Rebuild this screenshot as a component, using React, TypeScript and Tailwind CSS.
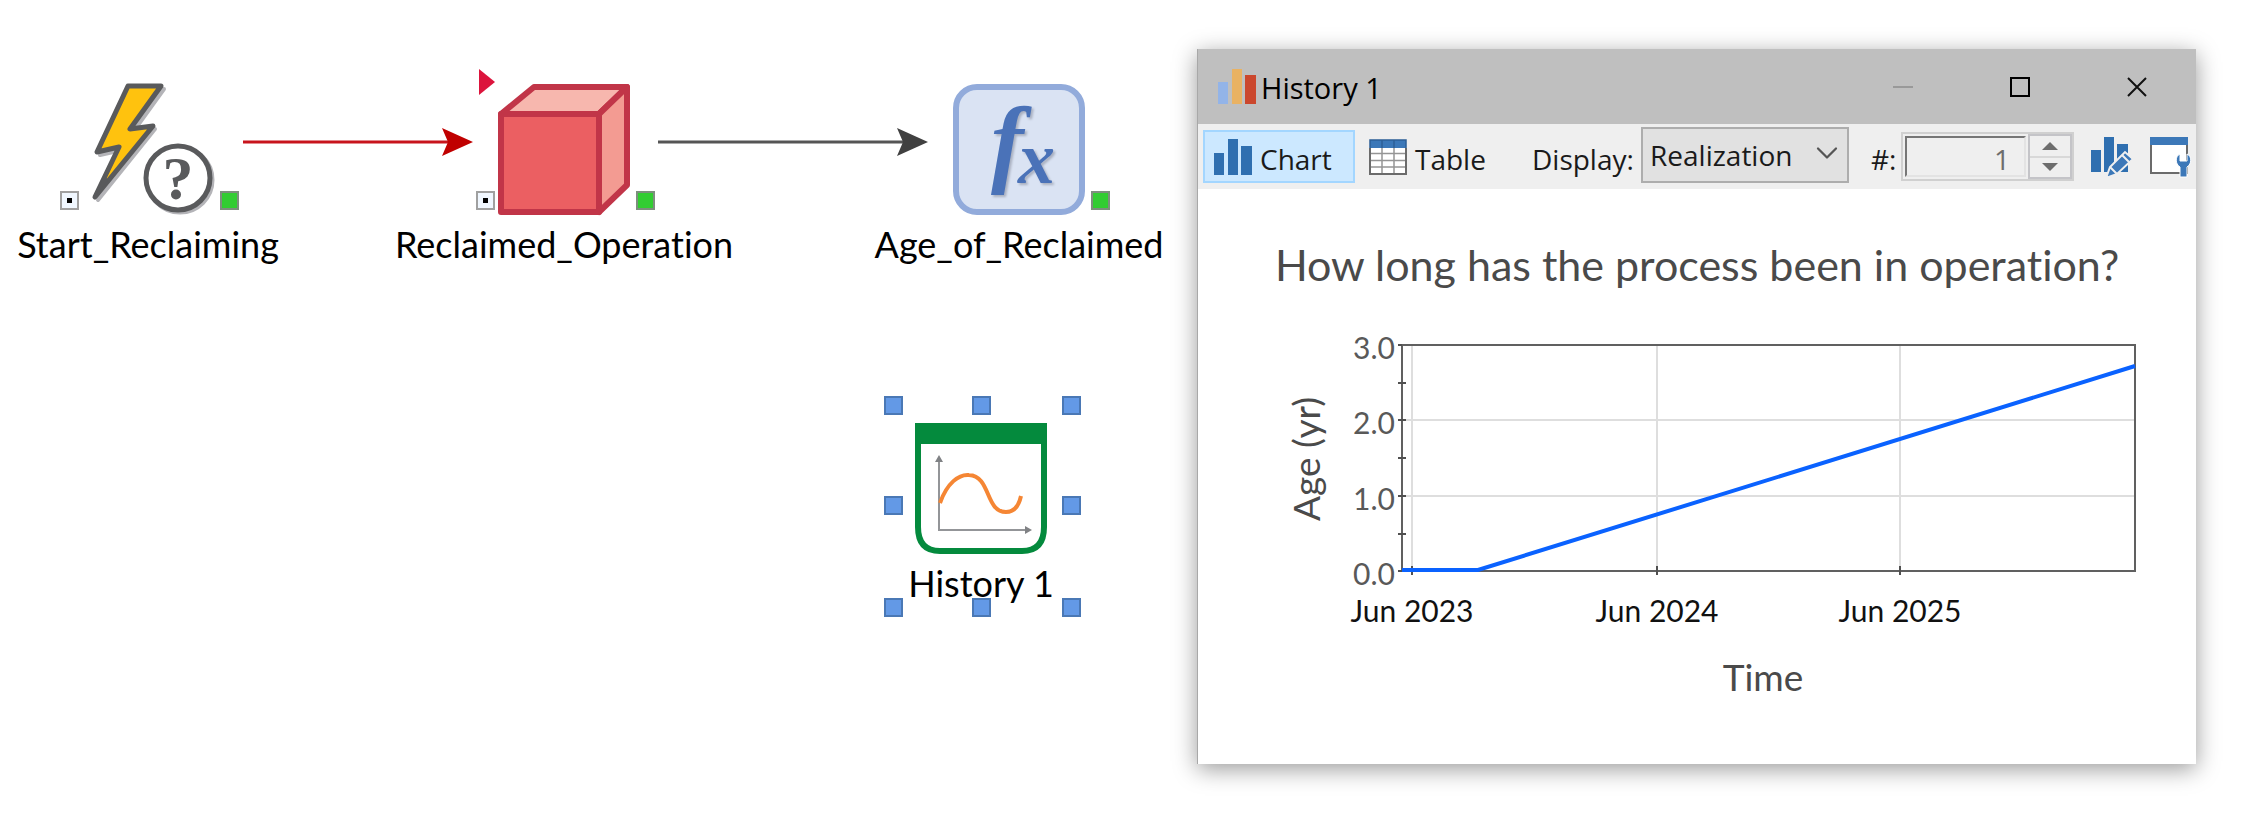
import React from 'react';
import { ChevronDown } from 'lucide-react';

const InputPort = () => (
  <span className="absolute -left-[22px] top-[107px] flex h-[19px] w-[19px] items-center justify-center border-2 border-[#a0a0a0] bg-[#f0f7ff]">
    <span className="h-[5px] w-[5px] bg-black" />
  </span>
);

const OutputPort = () => (
  <span className="absolute -right-[25px] top-[107px] h-[19px] w-[19px] border-2 border-[#7d8f7d] bg-[#32cd32]" />
);

type NodeProps = {
  label: string;
  className: string;
  children: React.ReactNode;
};

const ModelNode = ({ label, className, children }: NodeProps) => (
  <div className={`absolute flex w-[132px] flex-col items-center ${className}`}>
    {children}
    <span className="mt-2 whitespace-nowrap text-[36px] leading-10 text-black">{label}</span>
  </div>
);

const EventIcon = () => (
  <svg viewBox="0 0 132 132" className="h-[132px] w-[132px] overflow-visible">
    <path
      d="M49 5 L82 5 L51 48 L73 45 L16 116 L40 66 L18 71 Z"
      fill="#b4b4b8"
      stroke="#b4b4b8"
      strokeWidth="4"
      strokeLinejoin="round"
    />
    <path
      d="M46 2 L79 2 L48 45 L71 42 L13 113 L37 63 L15 68 Z"
      fill="#ffc20e"
      stroke="#595a5c"
      strokeWidth="5"
      strokeLinejoin="round"
    />
    <path d="M13 113 L22 91 L26 96 Z" fill="#595a5c" />
    <circle cx="98" cy="96" r="32" fill="none" stroke="#b4b4b8" strokeWidth="5" />
    <circle cx="96" cy="94" r="32" fill="#fff" stroke="#595a5c" strokeWidth="5" />
    <text x="96" y="115" textAnchor="middle" fontSize="62" fontWeight="700" fill="#595a5c" className="font-['Liberation_Serif',serif]">
      ?
    </text>
  </svg>
);

const CubeIcon = () => (
  <svg viewBox="0 0 132 132" className="h-[132px] w-[132px]">
    <g stroke="#c13548" strokeWidth="6" strokeLinejoin="round">
      <path d="M3 30 L36 3 L129 3 L101 30 Z" fill="#f7b7ae" />
      <path d="M101 30 L129 3 L129 101 L101 128 Z" fill="#f39b92" />
      <path d="M3 30 H101 V128 H3 Z" fill="#eb5f62" />
    </g>
  </svg>
);

const FunctionIcon = () => (
  <svg viewBox="0 0 132 132" className="h-[132px] w-[132px]">
    <rect x="3" y="3" width="126" height="125" rx="21" fill="#dae3f3" stroke="#92abdb" strokeWidth="6" />
    <text
      fill="#4a72b8"
      fontWeight="700"
      fontStyle="italic"
      className="font-['Liberation_Serif',serif] drop-shadow-[2px_2px_1px_#a9b0c0]"
    >
      <tspan x="38" y="90" fontSize="98">f</tspan>
      <tspan x="65" y="99" fontSize="74">x</tspan>
    </text>
  </svg>
);

const HistoryIcon = () => (
  <svg viewBox="0 0 132 132" className="h-[132px] w-[132px]">
    <path d="M3 3 H129 V104 Q129 128 107 128 H25 Q3 128 3 104 Z" fill="#fff" stroke="#048a3d" strokeWidth="6" />
    <rect x="0" y="0" width="132" height="21" fill="#048a3d" />
    <path d="M24 37 V107 H110" fill="none" stroke="#939598" strokeWidth="2" />
    <path d="M20 39 L24 32 L28 39 Z M110 103 L117 107 L110 111 Z" fill="#808285" />
    <path
      d="M25 80 C32 60 44 51 54 52 C76 53 70 89 91 89 C100 89 104 82 106 73"
      fill="none"
      stroke="#f58634"
      strokeWidth="4"
    />
  </svg>
);

const handlePositions = [
  'left-0 top-0',
  'left-[88px] top-0',
  'right-0 top-0',
  'left-0 top-[100px]',
  'right-0 top-[100px]',
  'left-0 bottom-0',
  'left-[88px] bottom-0',
  'right-0 bottom-0',
];

// Model graph with the influence arrows behind the nodes
const ModelCanvas = () => (
  <section className="relative w-[1197px] shrink-0">
    <svg viewBox="0 0 1197 240" className="absolute left-0 top-0 h-[240px] w-[1197px]">
      <path d="M243 142 H450" stroke="#c8141c" strokeWidth="3" />
      <path d="M442 128 L473 142 L442 156 L448 142 Z" fill="#c00000" />
      <path d="M658 142 H904" stroke="#555" strokeWidth="3" />
      <path d="M897 128 L928 142 L897 156 L903 142 Z" fill="#404040" />
      <path d="M479 69 L495 82 L479 95 Z" fill="#dc143c" />
    </svg>

    <ModelNode label="Start_Reclaiming" className="left-[82px] top-[84px]">
      <EventIcon />
      <InputPort />
      <OutputPort />
    </ModelNode>

    <ModelNode label="Reclaimed_Operation" className="left-[498px] top-[84px]">
      <CubeIcon />
      <InputPort />
      <OutputPort />
    </ModelNode>

    <ModelNode label="Age_of_Reclaimed" className="left-[953px] top-[84px]">
      <FunctionIcon />
      <OutputPort />
    </ModelNode>

    <ModelNode label="History 1" className="left-[915px] top-[423px]">
      <HistoryIcon />
    </ModelNode>
    <div className="absolute left-[884px] top-[396px] h-[221px] w-[197px]">
      {handlePositions.map((position) => (
        <span key={position} className={`absolute h-[19px] w-[19px] border-2 border-[#4a78b5] bg-[#6399e6] ${position}`} />
      ))}
    </div>
  </section>
);

const TitleBar = () => (
  <header className="flex h-[75px] items-center bg-[#bfbfbf] pl-5 pr-px">
    <svg viewBox="0 0 38 36" className="h-9 w-[38px]">
      <rect x="0" y="13" width="10" height="22" fill="#93b4e8" />
      <rect x="14" y="0" width="10" height="35" fill="#e9b263" />
      <rect x="27" y="6" width="11" height="29" fill="#cb472d" />
    </svg>
    <h1 className="ml-[5px] flex-1 pt-[2px] text-[29px] text-black">History 1</h1>
    <button aria-label="Minimize" className="flex h-full w-[117px] items-center justify-center">
      <span className="h-[2px] w-5 bg-[#999]" />
    </button>
    <button aria-label="Maximize" className="flex h-full w-[117px] items-center justify-center">
      <span className="h-5 w-5 border-2 border-black" />
    </button>
    <button aria-label="Close" className="flex h-full w-[117px] items-center justify-center">
      <svg viewBox="0 0 20 20" className="h-5 w-5">
        <path d="M1 1 L19 19 M19 1 L1 19" stroke="#111" strokeWidth="2" />
      </svg>
    </button>
  </header>
);

const Toolbar = () => (
  <div className="flex h-[65px] items-center bg-[#efefef] pl-[5px] text-[28px] text-[#1a1a1a]">
    <button className="flex h-[53px] w-[152px] items-center gap-2 border-2 border-[#a3d6ff] bg-[#cce8ff] pl-[9px]">
      <svg viewBox="0 0 38 36" className="h-9 w-[38px]" fill="#2f6fb0">
        <rect x="0" y="14" width="10" height="22" />
        <rect x="14" y="0" width="10" height="36" />
        <rect x="27" y="7" width="11" height="29" />
      </svg>
      <span className="pt-1">Chart</span>
    </button>
    <button className="flex h-[53px] w-[141px] items-center gap-2 pl-[14px]">
      <svg viewBox="0 0 38 36" className="h-9 w-[38px]">
        <rect x="1" y="1" width="36" height="34" fill="#fff" />
        <rect x="1" y="1" width="36" height="8" fill="#3c78b8" />
        <path d="M1 14.5 H37 M1 21.5 H37 M1 28 H37 M13 9 V35 M25 9 V35" stroke="#959595" strokeWidth="1.5" />
        <path d="M13 1 V9 M25 1 V9" stroke="#2d5f96" strokeWidth="1.5" />
        <path d="M1 9 V35 H37 V9" fill="none" stroke="#6b6b6b" strokeWidth="2" />
        <path d="M1 9 V1 H37 V9" fill="none" stroke="#2d5f96" strokeWidth="1.5" />
      </svg>
      <span className="pt-1">Table</span>
    </button>

    <label htmlFor="display" className="ml-9 w-[109px] pt-1">Display:</label>
    <div className="relative mb-1 h-[56px] w-[208px]">
      <select id="display" className="h-full w-full appearance-none border-2 border-[#adadad] bg-[#e1e1e1] pl-[7px]">
        <option>Realization</option>
      </select>
      <ChevronDown className="pointer-events-none absolute right-1 top-2 h-9 w-9 text-[#555]" strokeWidth={1.5} />
    </div>

    <label htmlFor="realization" className="ml-[22px] w-[30px] pt-1">#:</label>
    <div className="flex h-[49px] w-[173px] border-2 border-[#d0d0d0]">
      <input
        id="realization"
        disabled
        defaultValue="1"
        className="m-[2px] w-[121px] border-2 border-b-[#e3e3e3] border-l-[#767676] border-r-[#e3e3e3] border-t-[#767676] bg-[#efefef] pr-[14px] pt-1 text-right text-[#6d6d6d]"
      />
      <div className="flex flex-1 flex-col border-2 border-[#c4c4c8]">
        <button aria-label="Increase" className="flex flex-1 items-center justify-center border-b-2 border-[#d8d8d8]">
          <svg viewBox="0 0 16 8" className="h-2 w-4"><path d="M0 8 L8 0 L16 8 Z" fill="#6d6d6d" /></svg>
        </button>
        <button aria-label="Decrease" className="flex flex-1 items-center justify-center">
          <svg viewBox="0 0 16 8" className="h-2 w-4"><path d="M0 0 L8 8 L16 0 Z" fill="#6d6d6d" /></svg>
        </button>
      </div>
    </div>

    <button aria-label="Edit chart" className="ml-4 shrink-0">
      <svg viewBox="0 0 42 42" className="h-[42px] w-[42px]">
        <g fill="#2f6fb0">
          <rect x="1" y="14" width="10" height="22" />
          <rect x="14" y="1" width="10" height="35" />
          <rect x="27" y="8" width="11" height="28" />
        </g>
        <path d="M16 42 L20 31 L35 16 L43 23 L27 38 Z" fill="#3c78b8" stroke="#efefef" strokeWidth="2" />
        <path d="M32 19 L39 26 M20 31 L27 38" stroke="#efefef" strokeWidth="2" />
      </svg>
    </button>
    <button aria-label="Window properties" className="ml-[17px] shrink-0">
      <svg viewBox="0 0 42 42" className="h-[42px] w-[42px]">
        <path d="M2 9 V37 H38 V9" fill="#fff" stroke="#6b6b6b" strokeWidth="2" />
        <rect x="1" y="1" width="38" height="8" fill="#3c78b8" />
        <path
          d="M31 18 C26 20 26 28 31 31 V41 H38 V31 C43 28 43 20 38 18 V25 H31 Z"
          fill="#3c78b8"
          stroke="#fff"
          strokeWidth="1"
        />
      </svg>
    </button>
  </div>
);

const gridX = [214, 459, 702];
const gridY = [120, 196];
const minorTicks = [83, 120, 158, 196, 234];
const yLabels = [
  { text: '3.0', y: 59 },
  { text: '2.0', y: 134 },
  { text: '1.0', y: 210 },
  { text: '0.0', y: 285 },
];
const xLabels = [
  { text: 'Jun 2023', x: 214 },
  { text: 'Jun 2024', x: 459 },
  { text: 'Jun 2025', x: 702 },
];

const HistoryChart = () => (
  <svg viewBox="0 0 998 464" className="block w-full">
    <g stroke="#dedede" strokeWidth="2">
      {gridX.map((x) => <path key={x} d={`M${x} 45 V271`} />)}
      {gridY.map((y) => <path key={y} d={`M204 ${y} H937`} />)}
    </g>
    <rect x="204" y="45" width="733" height="226" fill="none" stroke="#606060" strokeWidth="2" />
    <g stroke="#505050" strokeWidth="2">
      <path d="M200 45 H204 M200 271 H204" />
      {minorTicks.map((y) => <path key={y} d={`M200 ${y} H208`} />)}
      {gridX.map((x) => <path key={x} d={`M${x} 266 V275`} />)}
    </g>
    <path d="M204 270 H280 L937 66" fill="none" stroke="#0a62ff" strokeWidth="4" />
    <g fill="#595959" fontSize="30" textAnchor="end">
      {yLabels.map((label) => <text key={label.text} x="197" y={label.y}>{label.text}</text>)}
    </g>
    <g fill="#111" fontSize="30" textAnchor="middle">
      {xLabels.map((label) => <text key={label.text} x={label.x} y="322">{label.text}</text>)}
    </g>
    <g fill="#4a4a4a" fontSize="37" textAnchor="middle">
      <text x="565" y="391">Time</text>
      <text transform="translate(122 159) rotate(-90)">Age (yr)</text>
    </g>
  </svg>
);

const App = () => {
  return (
    <main className="flex min-h-screen items-start bg-white font-['Lato',sans-serif] [font-variant-ligatures:none]">
      <ModelCanvas />

      {/* Result window */}
      <section className="mr-[51px] mt-[49px] min-w-0 flex-1 border-l border-[#a8a8a8] bg-white shadow-[0_5px_22px_rgba(0,0,0,0.4)]">
        <div className="font-['Open_Sans',sans-serif]">
          <TitleBar />
          <Toolbar />
        </div>
        <h2 className="pb-[14px] pt-[54px] text-center text-[43px] leading-[43px] text-[#4a4a4a]">
          How long has the process been in operation?
        </h2>
        <HistoryChart />
      </section>
    </main>
  );
};

export default App;
